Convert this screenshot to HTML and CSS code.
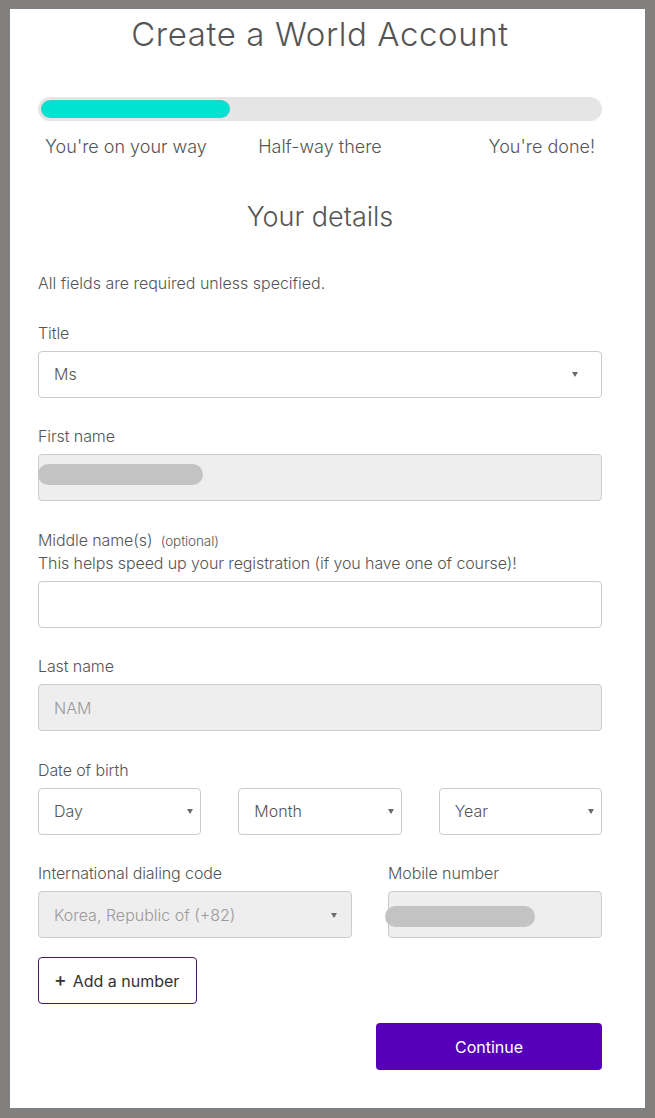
FILE: index.html
```html
<!DOCTYPE html>
<html lang="en">
<head>
<meta charset="utf-8">
<title>Create a World Account</title>
<link rel="stylesheet" href="styles.css">
</head>
<body>
<main class="panel">
  <h1 class="page-title">Create a World Account</h1>

  <div class="progress">
    <div class="progress-fill"></div>
  </div>
  <div class="progress-labels">
    <span class="pl-left">You're on your way</span>
    <span class="pl-mid">Half-way there</span>
    <span class="pl-right">You're done!</span>
  </div>

  <h2 class="section-title">Your details</h2>

  <p class="note">All fields are required unless specified.</p>

  <div class="field">
    <label class="label">Title</label>
    <div class="box select select-title"><span>Ms</span><i class="caret"></i></div>
  </div>

  <div class="field">
    <label class="label">First name</label>
    <div class="box disabled"><span class="redact redact-first"></span></div>
  </div>

  <div class="field">
    <label class="label">Middle name(s) <small class="optional">(optional)</small><br>This helps speed up your registration (if you have one of course)!</label>
    <div class="box"></div>
  </div>

  <div class="field">
    <label class="label">Last name</label>
    <div class="box disabled"><span class="muted">NAM</span></div>
  </div>

  <div class="field">
    <label class="label">Date of birth</label>
    <div class="dob">
      <div class="box select select-dob"><span>Day</span><i class="caret"></i></div>
      <div class="box select select-dob"><span>Month</span><i class="caret"></i></div>
      <div class="box select select-dob"><span>Year</span><i class="caret"></i></div>
    </div>
  </div>

  <div class="phone">
    <div class="field">
      <label class="label">International dialing code</label>
      <div class="box select select-dial disabled"><span class="muted">Korea, Republic of (+82)</span><i class="caret"></i></div>
    </div>
    <div class="field">
      <label class="label">Mobile number</label>
      <div class="box disabled"><span class="redact redact-mobile"></span></div>
    </div>
  </div>

  <button class="btn-add"><span class="plus">+</span>Add a number</button>

  <div class="actions">
    <button class="btn-continue">Continue</button>
  </div>
</main>
</body>
</html>
```

FILE: styles.css
```css
* { box-sizing: border-box; }

html, body {
  margin: 0;
  padding: 0;
}

body {
  background: #827f7f;
  font-family: Inter, "Liberation Sans", sans-serif;
  font-weight: 300;
  color: #555;
  padding: 9px 10px 0 10px;
  height: 1118px;
  overflow: hidden;
}

.panel {
  width: 635px;
  height: 1099px;
  background: #fff;
  padding: 5px 43px 0 28px;
}

.page-title {
  margin: 0;
  font-size: 33px;
  line-height: 40px;
  font-weight: 300;
  text-align: center;
  color: #555;
  letter-spacing: 0.6px;
}

.progress {
  margin-top: 43px;
  height: 24px;
  border-radius: 12px;
  background: #e5e5e5;
  padding: 4px;
}

.progress-fill {
  width: 187px;
  height: 16px;
  border-radius: 8px;
  background: #00e3d3;
  box-shadow: 0 0 0 1px #2cd3c6;
}

.progress-labels {
  margin-top: 14.5px;
  display: grid;
  grid-template-columns: 1fr auto 1fr;
  padding: 0 7px;
  font-size: 18px;
  line-height: 22px;
  color: #555;
}
.pl-left { text-align: left; }
.pl-mid { text-align: center; }
.pl-right { text-align: right; }

.section-title {
  margin: 42.7px 0 0;
  font-size: 27px;
  line-height: 34px;
  font-weight: 300;
  text-align: center;
  color: #555;
}

.note {
  margin: 38px 0 0;
  font-size: 16px;
  line-height: 22px;
}

.field {
  margin-top: 27.5px;
  display: flex;
  flex-direction: column;
  gap: 7px;
}

.label {
  font-size: 16px;
  line-height: 22px;
  color: #555;
  letter-spacing: -0.1px;
}

.optional {
  font-size: 13.5px;
  margin-left: 4px;
}

.box {
  position: relative;
  height: 47px;
  border: 1px solid #cccccc;
  border-radius: 4px;
  background: #fff;
  display: flex;
  align-items: center;
  padding: 0 15px;
  font-size: 16px;
  color: #555;
}

.box.disabled {
  background: #eeeeee;
}

.muted { color: #9a9a9a; }

.select {
  justify-content: space-between;
}
.select-title { padding-right: 23px; }
.select-dob { padding-right: 7px; }
.select-dial { padding-right: 14px; }

.caret {
  display: block;
  width: 0;
  height: 0;
  border-left: 3.5px solid transparent;
  border-right: 3.5px solid transparent;
  border-top: 5px solid #6a6a6a;
  margin-top: 1px;
}

.redact {
  position: absolute;
  height: 21px;
  border-radius: 10.5px;
  background: #c3c3c3;
  filter: blur(0.6px);
}
.redact-first {
  left: -1px;
  top: 9px;
  width: 165px;
}
.redact-mobile {
  left: -4px;
  top: 14px;
  width: 150px;
}

.dob {
  display: grid;
  grid-template-columns: repeat(3, 1fr);
  gap: 37px;
}

.phone {
  display: grid;
  grid-template-columns: 314px 1fr;
  gap: 36px;
}

.btn-add {
  margin-top: 19px;
  height: 47px;
  width: 159px;
  border: 1px solid #4a1763;
  border-radius: 4px;
  background: #fff;
  font-family: Inter, "Liberation Sans", sans-serif;
  font-weight: 400;
  font-size: 16px;
  color: #333;
  display: flex;
  align-items: center;
  padding: 0 0 0 15px;
  cursor: pointer;
}
.plus {
  font-size: 19px;
  font-weight: 500;
  margin-right: 6px;
  line-height: 1;
  margin-top: -3px;
}

.actions {
  margin-top: 19px;
  display: flex;
  justify-content: flex-end;
}

.btn-continue {
  width: 226px;
  height: 47px;
  border: 0;
  border-radius: 4px;
  background: #5600b9;
  color: #fff;
  font-family: Inter, "Liberation Sans", sans-serif;
  font-weight: 400;
  font-size: 16px;
  cursor: pointer;
}
```
